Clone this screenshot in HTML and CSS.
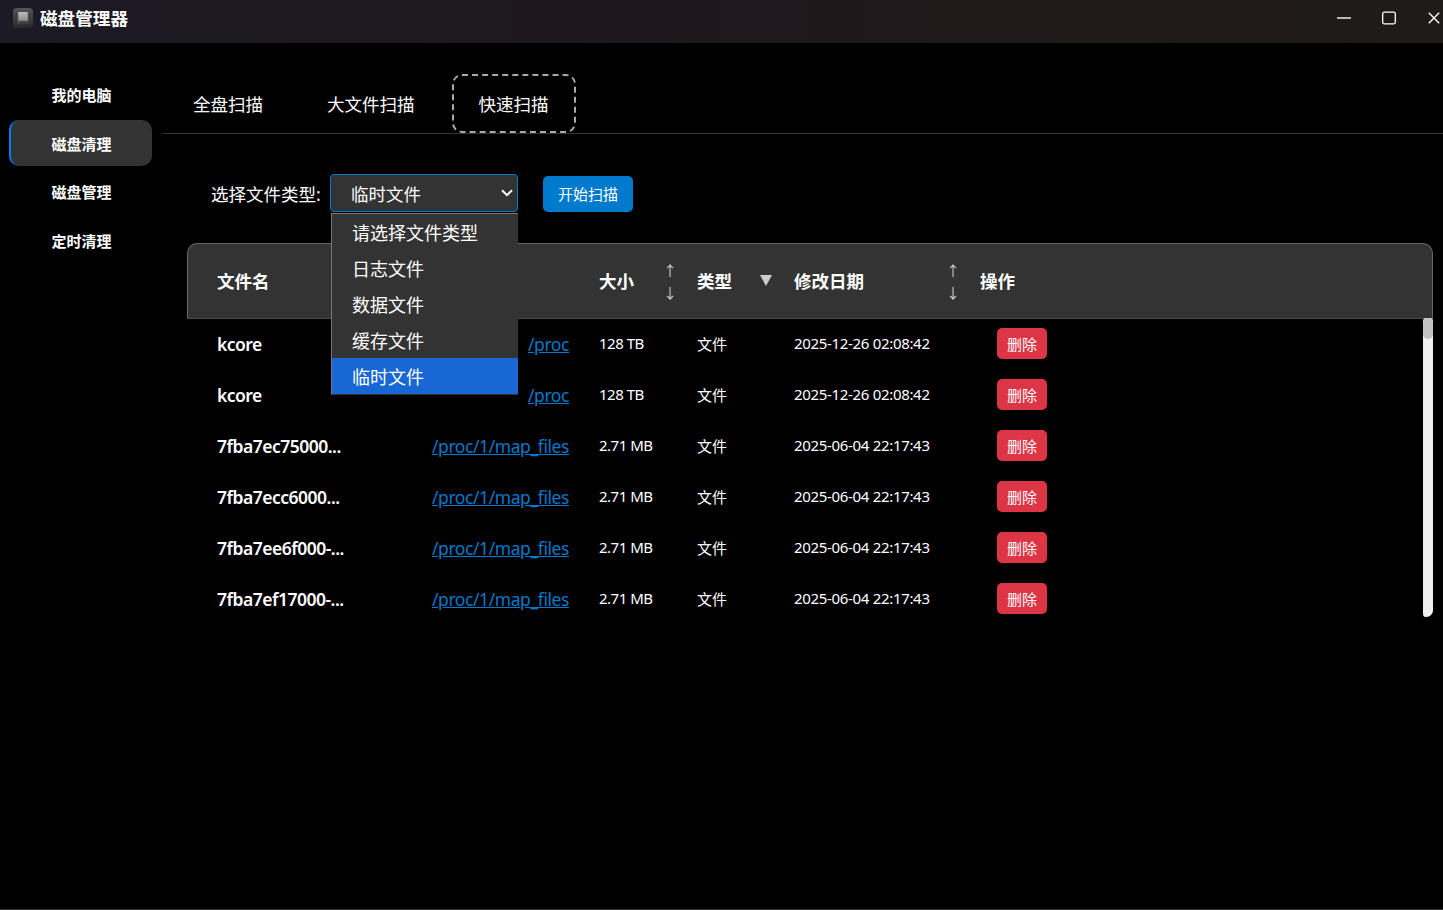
FILE: index.html
```html
<!DOCTYPE html>
<html lang="zh-CN">
<head>
  <meta charset="UTF-8">
  <meta name="viewport" content="width=device-width, initial-scale=1.0">
  <title>磁盘管理器</title>
  <link rel="stylesheet" href="styles.css">
</head>
<body>
  <header class="title-bar">
    <svg class="app-icon" width="20" height="20" viewBox="0 0 20 20">
      <defs>
        <linearGradient id="case" x1="0" y1="0" x2="0" y2="1">
          <stop offset="0" stop-color="#555"/>
          <stop offset="1" stop-color="#292929"/>
        </linearGradient>
        <linearGradient id="disk" x1="0" y1="0" x2="0" y2="1">
          <stop offset="0" stop-color="#bdbdbd"/>
          <stop offset="1" stop-color="#8c8c8c"/>
        </linearGradient>
      </defs>
      <rect width="20" height="20" rx="4" fill="url(#case)"/>
      <path d="M5 4h10l1 9v2.5H4V13z" fill="#444"/>
      <path d="M5.2 4h9.6v8.8H5.2z" fill="url(#disk)"/>
      <rect x="5" y="14" width="1" height="1" fill="#2ca85a"/>
    </svg>
    <h1>磁盘管理器</h1>
    <div class="window-controls">
      <svg width="14" height="14" viewBox="0 0 14 14"><path d="M0 7h14" stroke="#b8b8b8" stroke-width="2"/></svg>
      <svg width="14" height="14" viewBox="0 0 14 14"><rect x="0.7" y="1.2" width="12.6" height="11.6" rx="1.5" fill="none" stroke="#fff" stroke-width="1.3"/></svg>
      <svg width="12" height="12" viewBox="0 0 12 12"><path d="M.8.8l10.4 10.4M11.2.8L.8 11.2" stroke="#fff" stroke-width="1.4"/></svg>
    </div>
  </header>

  <div class="container">
    <nav class="sidebar">
      <a class="nav-item">我的电脑</a>
      <a class="nav-item active">磁盘清理</a>
      <a class="nav-item">磁盘管理</a>
      <a class="nav-item">定时清理</a>
    </nav>

    <main class="content">
      <div class="tabs">
        <div class="tab">全盘扫描</div>
        <div class="tab">大文件扫描</div>
        <div class="tab active">快速扫描</div>
      </div>

      <div class="filter">
        <label>选择文件类型:</label>
        <div class="select">
          <span>临时文件</span>
          <svg width="12" height="8" viewBox="0 0 12 8"><path d="M1 1.2l5 5 5-5" fill="none" stroke="#fff" stroke-width="2"/></svg>
          <ul class="options">
            <li>请选择文件类型</li>
            <li>日志文件</li>
            <li>数据文件</li>
            <li>缓存文件</li>
            <li class="selected">临时文件</li>
          </ul>
        </div>
        <button class="scan-btn">开始扫描</button>
      </div>

      <div class="file-table">
        <div class="row table-head">
          <div>文件名</div>
          <div class="sortable">大小<span class="arrows"><i>↑</i><i>↓</i></span></div>
          <div class="sortable">类型<svg class="triangle" width="12" height="11" viewBox="0 0 12 11"><path d="M0 0h12L6 11z" fill="#ccc"/></svg></div>
          <div class="sortable">修改日期<span class="arrows"><i>↑</i><i>↓</i></span></div>
          <div>操作</div>
        </div>
        <div class="table-body">
          <div class="rows">
            <div class="row">
              <div class="file"><b>kcore</b><a>/proc</a></div>
              <div class="num">128 TB</div><div class="type">文件</div><div class="date">2025-12-26 02:08:42</div>
              <div><button class="delete-btn">删除</button></div>
            </div>
            <div class="row">
              <div class="file"><b>kcore</b><a>/proc</a></div>
              <div class="num">128 TB</div><div class="type">文件</div><div class="date">2025-12-26 02:08:42</div>
              <div><button class="delete-btn">删除</button></div>
            </div>
            <div class="row">
              <div class="file"><b>7fba7ec75000...</b><a>/proc/1/map_files</a></div>
              <div class="num">2.71 MB</div><div class="type">文件</div><div class="date">2025-06-04 22:17:43</div>
              <div><button class="delete-btn">删除</button></div>
            </div>
            <div class="row">
              <div class="file"><b>7fba7ecc6000...</b><a>/proc/1/map_files</a></div>
              <div class="num">2.71 MB</div><div class="type">文件</div><div class="date">2025-06-04 22:17:43</div>
              <div><button class="delete-btn">删除</button></div>
            </div>
            <div class="row">
              <div class="file"><b>7fba7ee6f000-...</b><a>/proc/1/map_files</a></div>
              <div class="num">2.71 MB</div><div class="type">文件</div><div class="date">2025-06-04 22:17:43</div>
              <div><button class="delete-btn">删除</button></div>
            </div>
            <div class="row">
              <div class="file"><b>7fba7ef17000-...</b><a>/proc/1/map_files</a></div>
              <div class="num">2.71 MB</div><div class="type">文件</div><div class="date">2025-06-04 22:17:43</div>
              <div><button class="delete-btn">删除</button></div>
            </div>
          </div>
          <div class="scrollbar"><div class="thumb"></div></div>
        </div>
      </div>
    </main>
  </div>
</body>
</html>
```
FILE: styles.css
```css
:root {
  --panel: #333;
  --line: #666;
  --blue: #007acc;
  --red: #dc3545;
}

* {
  box-sizing: border-box;
}

body {
  margin: 0;
  height: 910px;
  display: flex;
  flex-direction: column;
  overflow: hidden;
  background: #000;
  color: #fff;
  font-family: "Noto Sans", "Noto Sans CJK SC", sans-serif;
  font-size: 17.5px;
  border-bottom: 1px solid #353136;
}

.title-bar {
  display: flex;
  align-items: center;
  flex: none;
  height: 43px;
  padding: 0 3px 7px 13px;
  background: linear-gradient(to right, #1c1a24, #1f171d 45%, #201a19 75%, #1f1b18);
}

.title-bar h1 {
  margin: 0 0 0 7px;
  font-size: 17.6px;
  line-height: 24px;
}

.window-controls {
  display: flex;
  align-items: center;
  gap: 31px;
  margin-left: auto;
}

.window-controls svg:last-child {
  margin-left: 1px;
}

.container {
  display: flex;
  flex: 1;
}

.sidebar {
  width: 162px;
  padding: 28px 10px 0 9px;
}

.nav-item {
  display: flex;
  align-items: center;
  justify-content: center;
  height: 46px;
  margin-bottom: 2.7px;
  border-left: 2px solid transparent;
  border-radius: 10px;
  font-size: 15px;
  font-weight: bold;
}

.nav-item.active {
  padding-top: 2px;
  background: var(--panel);
  border-left-color: #007bff;
}

.content {
  flex: 1;
}

.tabs {
  display: flex;
  gap: 10px;
  height: 91px;
  padding: 31px 0 0 4px;
  border-bottom: 1px solid #333;
}

.tab {
  padding: 16px 25px 0;
  border: 2px solid transparent;
  border-radius: 10px;
  line-height: 24px;
}

.tab.active {
  border: 2px dashed #aaa;
}

.filter {
  display: flex;
  align-items: center;
  height: 39px;
  margin: 40px 0 0 49px;
}

.filter label {
  width: 119px;
  white-space: nowrap;
}

.select {
  position: relative;
  display: flex;
  align-items: center;
  align-self: flex-start;
  justify-content: space-between;
  width: 188px;
  height: 38px;
  padding: 0 4px 0 20px;
  background: var(--panel);
  border: 1px solid var(--blue);
  border-radius: 4px;
}

.options {
  position: absolute;
  z-index: 1;
  top: 38px;
  left: 0;
  width: 187px;
  margin: 0;
  padding: 0;
  list-style: none;
  background: var(--panel);
  border: 1px solid #777;
  border-right: 0;
  border-bottom-color: #333;
  font-size: 18px;
}

.options li {
  height: 36px;
  padding-left: 20px;
  line-height: 38px;
}

.options .selected {
  background: #1967d2;
}

button {
  padding: 0;
  border: 0;
  border-radius: 5px;
  color: #fff;
  font-family: inherit;
  font-size: 15px;
}

.scan-btn {
  width: 90px;
  height: 36px;
  margin-left: 25px;
  background: var(--blue);
}

.file-table {
  margin: 30px 10px 0 25px;
}

.row {
  display: grid;
  grid-template-columns: 382px 98px 97px 186px 1fr;
  align-items: center;
  height: 51px;
  padding-left: 30px;
}

.table-head {
  height: 76px;
  padding: 0 0 2px 29px;
  background: var(--panel);
  border: 1px solid var(--line);
  border-bottom-color: #4a4a4a;
  border-radius: 10px 10px 0 0;
  font-weight: bold;
}

.sortable {
  display: flex;
  align-items: center;
  justify-content: space-between;
  padding-right: 22px;
}

.arrows {
  display: flex;
  flex-direction: column;
  margin: 2px -2px 0 0;
  color: #ccc;
  font-family: "Noto Sans CJK SC", sans-serif;
  font-size: 14px;
  font-weight: normal;
  line-height: 22px;
}

.arrows i {
  font-style: normal;
}

.table-body {
  display: flex;
  height: 299px;
  margin-top: -1px;
}

.rows {
  flex: 1;
  overflow: hidden;
}

.file {
  display: flex;
  justify-content: space-between;
  padding-right: 30px;
}

.file b {
  font-weight: 600;
  letter-spacing: -0.5px;
}

.file a {
  color: var(--blue);
  letter-spacing: -0.42px;
  text-decoration: underline;
}

.num,
.type,
.date {
  font-size: 15px;
}

.num,
.date {
  padding-bottom: 2px;
  letter-spacing: -0.32px;
}

.num {
  letter-spacing: -0.5px;
}

.delete-btn {
  display: block;
  width: 50px;
  height: 31px;
  margin-left: 17px;
  padding-bottom: 1px;
  background: var(--red);
}

.scrollbar {
  width: 10px;
  background: #f1f1f1;
  border-radius: 5px 5px 10px 5px;
}

.thumb {
  height: 21px;
  background: #c1c1c1;
  border-radius: 5px;
}
```
